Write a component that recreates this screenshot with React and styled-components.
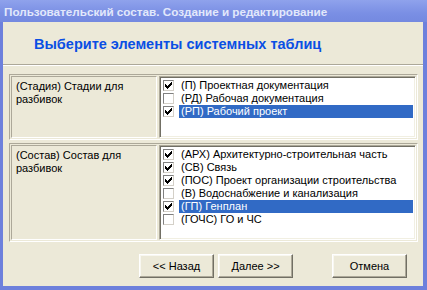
import React from 'react';
import styled, { createGlobalStyle } from 'styled-components';

const GlobalStyle = createGlobalStyle`
  html, body {
    margin: 0;
    padding: 0;
    background: #ece9d8;
  }
`;

const Window = styled.div`
  width: 427px;
  height: 290px;
  display: flex;
  flex-direction: column;
  background: #6d80dc;
  font-family: "Liberation Sans", Arial, sans-serif;
  box-sizing: border-box;
`;

const TitleBar = styled.div`
  height: 22px;
  flex: none;
  display: flex;
  align-items: center;
  padding-left: 4px;
  background: linear-gradient(#8fa2ec, #7a8fe4 60%, #7489e0);
  color: #e2e8fb;
  font-size: 11.7px;
  font-weight: bold;
  white-space: nowrap;
`;

const Body = styled.div`
  flex: 1;
  margin: 0 4px 4px 3px;
  background: #ece9d8;
  display: flex;
  flex-direction: column;
`;

const Heading = styled.div`
  margin: 14px 0 0 31px;
  font-size: 14.5px;
  line-height: 16px;
  font-weight: bold;
  color: #0a4fe4;
`;

const Separator = styled.div`
  margin-top: 12px;
  border-top: 1px solid #aca899;
  border-bottom: 1px solid #fff;
`;

const Group = styled.div`
  display: flex;
  gap: 2px;
  height: ${(p) => p.$height}px;
  margin: ${(p) => p.$top}px 5px 0 6px;
  padding: 1px;
  box-sizing: border-box;
  border: 1px solid;
  border-color: #aca899 #fff #fff #aca899;
`;

const LabelCell = styled.div`
  width: 146px;
  flex: none;
  box-sizing: border-box;
  padding: 3px 4px;
  border: 1px solid;
  border-color: #aca899 #fff #fff #aca899;
  font-size: 11px;
  line-height: 13px;
  color: #000;
`;

const ListBox = styled.div`
  flex: 1;
  background: #fff;
  border: 1px solid;
  border-color: #aca899 #fff #fff #aca899;
  box-shadow: inset 1px 1px 0 #716f64, inset -1px -1px 0 #f1efe2;
  padding: 2px 2px 0 3px;
`;

const Row = styled.div`
  display: flex;
  align-items: center;
  height: 13px;
`;

const CheckBox = styled.div`
  width: 11px;
  height: 11px;
  flex: none;
  box-sizing: border-box;
  border: 1px solid;
  border-color: #808080 #d4d0c8 #d4d0c8 #808080;
  background: #fff;
  display: flex;
  align-items: center;
  justify-content: center;
`;

const ItemText = styled.div`
  flex: 1;
  margin-left: 5px;
  padding-left: 2px;
  height: 13px;
  line-height: 13px;
  font-size: 11px;
  white-space: nowrap;
  color: ${(p) => (p.$selected ? '#fff' : '#000')};
  background: ${(p) => (p.$selected ? '#316ac5' : 'transparent')};
`;

const ButtonRow = styled.div`
  display: flex;
  justify-content: flex-end;
  margin-top: 12px;
  padding-right: 16px;
`;

const Button = styled.button`
  width: 75px;
  height: 24px;
  margin-left: ${(p) => p.$gap || 0}px;
  padding: 0;
  background: #ece9d8;
  border: 1px solid;
  border-color: #fff #716f64 #716f64 #fff;
  box-shadow: inset -1px -1px 0 #aca899, inset 1px 1px 0 #f8f7f0;
  font-family: "Liberation Sans", Arial, sans-serif;
  font-size: 11px;
  color: #000;
`;

const CheckMark = () => (
  <svg width="7" height="7" viewBox="0 0 7 7" shapeRendering="crispEdges">
    <path
      fill="#000"
      d="M6 0h1v1h-1z M5 1h2v1h-2z M0 2h1v1h-1z M4 2h3v1h-3z M0 3h2v1h-2z M3 3h3v1h-3z M0 4h5v1h-5z M1 5h3v1h-3z M2 6h1v1h-1z"
    />
  </svg>
);

const stages = [
  { text: '(П) Проектная документация', checked: true },
  { text: '(РД) Рабочая документация', checked: false },
  { text: '(РП) Рабочий проект', checked: true, selected: true },
];

const parts = [
  { text: '(АРХ) Архитектурно-строительная часть', checked: true },
  { text: '(СВ) Связь', checked: true },
  { text: '(ПОС) Проект организации строительства', checked: true },
  { text: '(В) Водоснабжение и канализация', checked: false },
  { text: '(ГП) Генплан', checked: true, selected: true },
  { text: '(ГОЧС) ГО и ЧС', checked: false },
];

const ItemList = ({ items }) => (
  <ListBox>
    {items.map((item, index) => (
      <Row key={index}>
        <CheckBox>{item.checked && <CheckMark />}</CheckBox>
        <ItemText $selected={item.selected}>{item.text}</ItemText>
      </Row>
    ))}
  </ListBox>
);

const App = () => {
  return (
    <>
      <GlobalStyle />
      <Window>
        <TitleBar>Пользовательский состав. Создание и редактирование</TitleBar>
        <Body>
          <Heading>Выберите элементы системных таблиц</Heading>
          <Separator />
          <Group $height={66} $top={8}>
            <LabelCell>(Стадия) Стадии для разбивок</LabelCell>
            <ItemList items={stages} />
          </Group>
          <Group $height={99} $top={3}>
            <LabelCell>(Состав) Состав для разбивок</LabelCell>
            <ItemList items={parts} />
          </Group>
          <ButtonRow>
            <Button>&lt;&lt; Назад</Button>
            <Button $gap={4}>Далее &gt;&gt;</Button>
            <Button $gap={39}>Отмена</Button>
          </ButtonRow>
        </Body>
      </Window>
    </>
  );
};

export default App;
